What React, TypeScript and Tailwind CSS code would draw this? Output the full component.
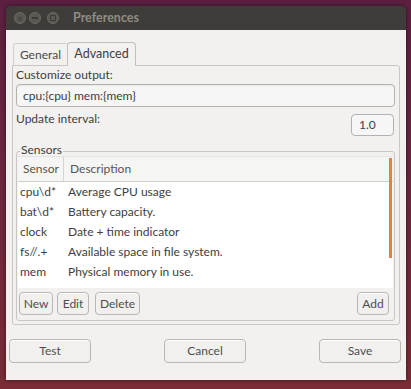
const rows = [
  ['cpu\\d*', 'Average CPU usage'],
  ['bat\\d*', 'Battery capacity.'],
  ['clock', 'Date + time indicator'],
  ['fs//.+', 'Available space in file system.'],
  ['mem', 'Physical memory in use.'],
]

function TitleButton({ children, className = '' }: { children?: React.ReactNode; className?: string }) {
  return (
    <div
      className={`w-[12px] h-[12px] rounded-full bg-[#5a5853] border border-[#6b6963] flex items-center justify-center text-[#3c3b37] text-[9px] leading-none ${className}`}
    >
      {children}
    </div>
  )
}

function Btn({ label, className = '' }: { label: string; className?: string }) {
  return (
    <div
      className={`h-[23px] rounded-[4px] border border-[#b9b7b3] bg-[#f1f0ef] flex items-center justify-center text-[#4e4e4e] shadow-[inset_0_1px_0_#ffffff] ${className}`}
    >
      {label}
    </div>
  )
}

export default function App() {
  return (
    <div
      className="w-[411px] h-[389px] bg-[linear-gradient(180deg,#5b2040_0%,#6a2640_40%,#7a2c36_100%)] pt-[6px] pl-[6px] text-[12px] text-[#404040]"
      style={{ fontFamily: 'Lato, "Noto Sans", sans-serif' }}
    >
      <div className="w-[400px] h-[374px] flex flex-col rounded-t-[5px] overflow-hidden shadow-[0_0_4px_rgba(0,0,0,0.5)]">
        <div className="h-[24px] bg-[#3e3d39] flex items-center pl-[8px]">
          <div className="flex items-center">
            <TitleButton>×</TitleButton>
            <TitleButton className="ml-[3px]">
              <div className="w-[6px] h-[2px] bg-[#3c3b37]" />
            </TitleButton>
            <TitleButton className="ml-[6px]">
              <div className="w-[6px] h-[6px] border border-[#3c3b37]" />
            </TitleButton>
          </div>
          <span className="ml-[14px] text-[#8f8c86] font-bold text-[12.5px]">Preferences</span>
        </div>

        <div className="flex-1 bg-[#f2f1f0] flex flex-col">
          <div className="pl-[6px] pr-[6px] pt-[11px]">
            <div className="flex items-end h-[24px] pl-[1px]">
              <div className="h-[22px] w-[54px] flex items-center justify-center text-[#4a4a4a] border-t border-l border-[#d2d0cc] rounded-tl-[3px]">
                General
              </div>
              <div className="h-[24px] w-[69px] flex items-center justify-center border border-b-0 border-[#c2c0bc] rounded-t-[4px] bg-[#f2f1f0] relative -mb-px z-10 text-[12.5px]">
                Advanced
              </div>
            </div>
            <div className="h-[260px] border border-[#c9c7c3] rounded-b-[3px] rounded-tr-[3px] px-[3px] pt-[1px] flex flex-col">
              <div className="h-[16px] flex items-center">Customize output:</div>
              <div className="h-[23px] mt-[1px] mr-[1px] border border-[#b4b2ae] rounded-[4px] bg-[#f6f6f6] flex items-center pl-[6px] shadow-[inset_0_1px_1px_rgba(0,0,0,0.06)]">
                cpu:{'{cpu}'} mem:{'{mem}'}
              </div>
              <div className="flex items-start justify-between mt-[7px] mr-[2px]">
                <div className="h-[14px] -mt-[2px] flex items-center">Update interval:</div>
                <div className="w-[43px] h-[22px] border border-[#b4b2ae] rounded-[4px] bg-[#f6f6f6] flex items-center pl-[7px]">
                  1.0
                </div>
              </div>
              <div className="relative mt-[15px] mr-[1px] h-[170px] border border-[#c9c7c3] rounded-[3px] px-[1px] pt-[4px]">
                <span className="absolute -top-[10px] left-[3px] bg-[#f2f1f0] px-[1px] leading-[16px]">Sensors</span>
                <div className="relative bg-white h-[132px] border-t border-[#e6e4e1] overflow-hidden">
                  <div className="h-[25px] bg-[#f5f5f4] border-b border-[#cfcdca] flex items-center text-[#555]">
                    <div className="w-[46px] pl-[5px] border-r border-[#d6d4d1] h-full flex items-center">Sensor</div>
                    <div className="pl-[6px]">Description</div>
                  </div>
                  <div>
                    {rows.map(([s, d]) => (
                      <div key={s} className="h-[20px] flex items-center">
                        <div className="w-[46px] pl-[2px]">{s}</div>
                        <div className="pl-[4px]">{d}</div>
                      </div>
                    ))}
                  </div>
                  <div className="absolute right-[1px] top-[1px] w-[3px] h-[100px] bg-[#e0804a]" />
                </div>
                <div className="flex items-center mt-[4px] pl-[1px] pr-[4px]">
                  <Btn label="New" className="w-[34px]" />
                  <Btn label="Edit" className="w-[32px] ml-[4px]" />
                  <Btn label="Delete" className="w-[45px] ml-[6px]" />
                  <Btn label="Add" className="w-[32px] ml-auto" />
                </div>
              </div>
            </div>
          </div>
          <div className="flex justify-between pl-[3px] pr-[5px] mt-[14px]">
            <Btn label="Test" className="w-[82px] h-[24px]" />
            <Btn label="Cancel" className="w-[82px] h-[24px]" />
            <Btn label="Save" className="w-[82px] h-[24px]" />
          </div>
        </div>
      </div>
    </div>
  )
}
